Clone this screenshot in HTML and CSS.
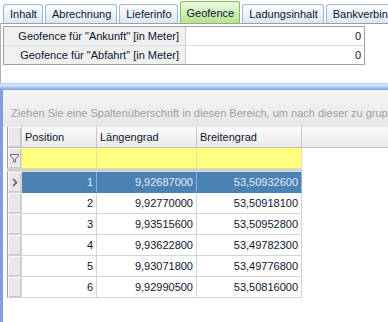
FILE: index.html
```html
<!DOCTYPE html>
<html lang="de">
<head>
    <meta charset="UTF-8">
    <title>Geofence</title>
    <link rel="stylesheet" href="styles.css">
</head>
<body>
    <div class="tabs">
        <div class="tab">Inhalt</div>
        <div class="tab">Abrechnung</div>
        <div class="tab">Lieferinfo</div>
        <div class="tab active">Geofence</div>
        <div class="tab">Ladungsinhalt</div>
        <div class="tab">Bankverbindung</div>
    </div>
    <div class="panel">
        <div class="props">
            <div class="prop-row">
                <div class="prop-label">Geofence für "Ankunft" [in Meter]</div>
                <div class="prop-value">0</div>
            </div>
            <div class="prop-row">
                <div class="prop-label">Geofence für "Abfahrt" [in Meter]</div>
                <div class="prop-value">0</div>
            </div>
        </div>
    </div>
    <div class="splitter"></div>
    <div class="grid-area">
        <div class="group-panel">Ziehen Sie eine Spaltenüberschrift in diesen Bereich, um nach dieser zu gruppieren</div>
        <div class="grid">
            <div class="row head">
                <div class="cell ind"></div>
                <div class="cell">Position</div>
                <div class="cell">Längengrad</div>
                <div class="cell">Breitengrad</div>
                <div class="cell fill"></div>
            </div>
            <div class="row filter">
                <div class="cell ind">
                    <svg width="9" height="9" viewBox="0 0 9 9"><path d="M0.5 0.5h8v1.5l-3 3v3h-2v-3l-3-3z" fill="none" stroke="#707070"/></svg>
                </div>
                <div class="cell"></div>
                <div class="cell"></div>
                <div class="cell"></div>
            </div>
            <div class="sep"></div>
            <div class="row data selected">
                <div class="cell ind">
                    <svg width="6" height="9" viewBox="0 0 6 9"><path d="M1 1l3.5 3.5L1 8" fill="none" stroke="#606060" stroke-width="1.6"/></svg>
                </div>
                <div class="cell num">1</div>
                <div class="cell num">9,92687000</div>
                <div class="cell num">53,50932600</div>
            </div>
            <div class="row data">
                <div class="cell ind"></div>
                <div class="cell num">2</div>
                <div class="cell num">9,92770000</div>
                <div class="cell num">53,50918100</div>
            </div>
            <div class="row data">
                <div class="cell ind"></div>
                <div class="cell num">3</div>
                <div class="cell num">9,93515600</div>
                <div class="cell num">53,50952800</div>
            </div>
            <div class="row data">
                <div class="cell ind"></div>
                <div class="cell num">4</div>
                <div class="cell num">9,93622800</div>
                <div class="cell num">53,49782300</div>
            </div>
            <div class="row data">
                <div class="cell ind"></div>
                <div class="cell num">5</div>
                <div class="cell num">9,93071800</div>
                <div class="cell num">53,49776800</div>
            </div>
            <div class="row data">
                <div class="cell ind"></div>
                <div class="cell num">6</div>
                <div class="cell num">9,92990500</div>
                <div class="cell num">53,50816000</div>
            </div>
        </div>
    </div>
</body>
</html>
```
FILE: styles.css
```css
body {
    margin: 0;
    width: 388px;
    height: 322px;
    overflow: hidden;
    background: #fff;
    font-family: "Liberation Sans", Arial, sans-serif;
    font-size: 11px;
    color: #0c1430;
}
.tabs {
    display: flex;
    align-items: flex-end;
    gap: 2px;
    height: 23px;
    padding-left: 3px;
    border-bottom: 1px solid #a0a0a0;
    white-space: nowrap;
    overflow: hidden;
}
.tab {
    height: 18px;
    line-height: 18px;
    padding: 0 5px 0 6px;
    border: 1px solid #9cb6d8;
    border-bottom: none;
    border-radius: 3px 3px 0 0;
    background: linear-gradient(#fdfeff, #d9e8f9);
}
.tab.active {
    height: 21px;
    line-height: 22px;
    border-color: #7cc05a;
    background: linear-gradient(#eefae4, #b4e48c);
}
.panel {
    height: 59px;
    padding: 2px 3px 0;
    border-left: 1px solid #b0b0b0;
    box-sizing: border-box;
}
.props {
    width: 360px;
    border: 1px solid #a0a0a0;
    margin-left: -1px;
}
.prop-row {
    display: flex;
    height: 18px;
    line-height: 18px;
}
.prop-row + .prop-row { border-top: 1px solid #dcdcdc; }
.prop-label {
    width: 175px;
    padding-right: 6px;
    text-align: right;
    background: #f0f0f0;
    border-right: 1px solid #d0d0d0;
}
.prop-value {
    flex: 1;
    text-align: right;
    padding-right: 3px;
}
.splitter {
    height: 7px;
    background: linear-gradient(#b8d4f2, #d6e8fa 40%, #a8c4ee 60%, #7f9de2);
}
.grid-area {
    height: 232px;
    border-left: 3px solid #7f9ee0;
}
.group-panel {
    height: 37px;
    line-height: 46px;
    padding-left: 8px;
    box-sizing: border-box;
    color: #a0a0a0;
    white-space: nowrap;
    overflow: hidden;
    background: linear-gradient(#f6f6f6, #e6e6e6);
}
.grid {
    margin-left: 4px;
}
.row {
    display: grid;
    grid-template-columns: 15px 75px 100px 105px;
    height: 21px;
}
.row.head { grid-template-columns: 15px 75px 100px 105px 1fr; }
.cell {
    border-right: 1px solid #d4d4d4;
    border-bottom: 1px solid #d4d4d4;
    line-height: 20px;
    padding: 0 3px;
    overflow: hidden;
    white-space: nowrap;
}
.cell.ind {
    padding: 0;
    display: flex;
    align-items: center;
    justify-content: center;
    border-left: 1px solid #a0a0a0;
    background: #e8e8e8;
    box-shadow: inset 1px 1px #fafafa, inset -1px -1px #c8c8c8;
}
.head .cell {
    background: linear-gradient(#fbfbfb, #ebebeb);
    border-right-color: #c8c8c8;
    border-bottom-color: #c0c0c0;
}
.head .cell.ind { background: #e8e8e8; }
.head .cell.fill { border-right: none; }
.filter .cell { background: #ffff80; border-color: #e2e2a0; }
.filter .cell.ind { background: #e8e8e8; border-left-color: #a0a0a0; border-bottom-color: #d4d4d4; }
.sep {
    width: 296px;
    height: 3px;
    background: linear-gradient(#c8c8c8, #e0e0e0);
}
.num { text-align: right; }
.selected .cell {
    background: #4a82b4;
    color: #e4ecf4;
    border-right-color: #8cb0d2;
    border-bottom-color: #4a82b4;
}
.selected .cell.ind {
    background: #e8e8e8;
    border-right-color: #d4d4d4;
    border-bottom-color: #d4d4d4;
}
```
